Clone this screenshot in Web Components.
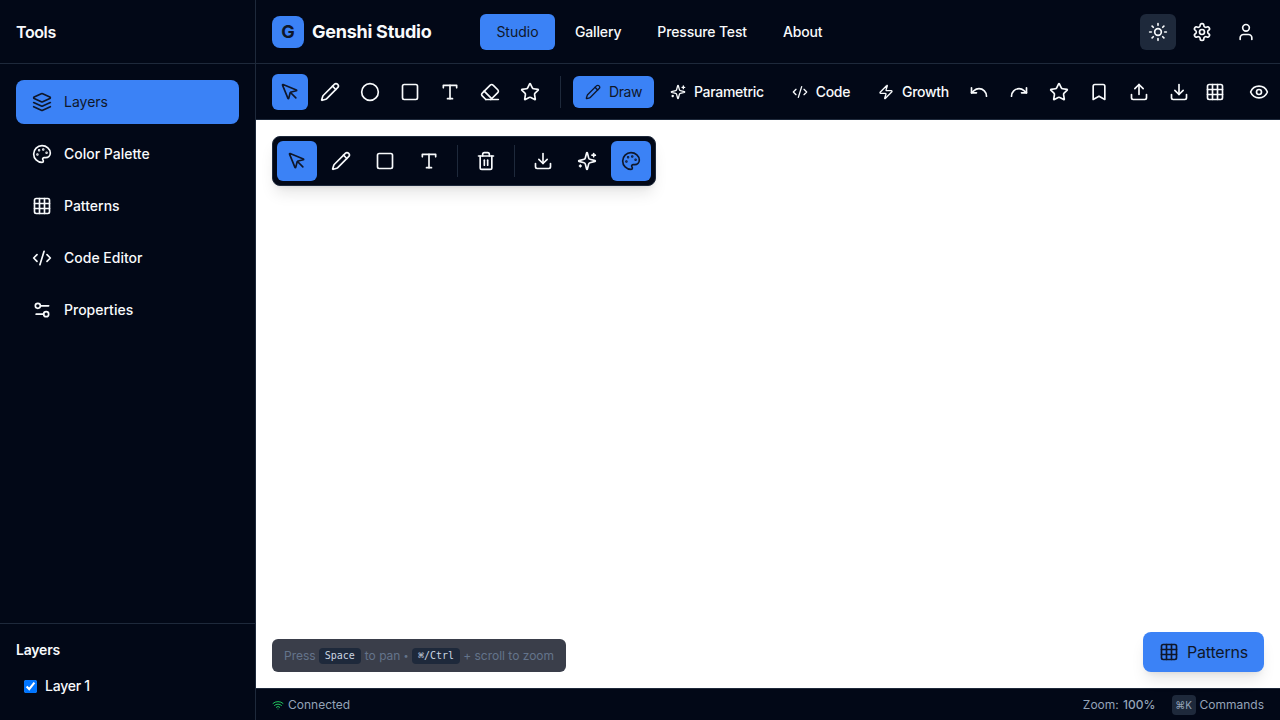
<!DOCTYPE html>
<html>
<head>
<meta charset="utf-8">
<title>Genshi Studio</title>
<style>
html, body { margin: 0; height: 100%; overflow: hidden; }
body { font-family: Inter, "Noto Sans", sans-serif; background: #020817; color: #f8fafc; }
</style>
</head>
<body>
<gs-app></gs-app>
<script>
//Lucide style icon bodies
const ICONS = {
	pointer: '<path d="M12.586 12.586 19 19"/><path d="M3.688 3.037a.497.497 0 0 0-.651.651l6.5 15.999a.501.501 0 0 0 .947-.062l1.569-6.083a2 2 0 0 1 1.448-1.479l6.124-1.579a.5.5 0 0 0 .063-.947z"/>',
	pencil: '<path d="M21.174 6.812a1 1 0 0 0-3.986-3.987L3.842 16.174a2 2 0 0 0-.5.83l-1.321 4.352a.5.5 0 0 0 .623.622l4.353-1.32a2 2 0 0 0 .83-.497z"/><path d="m15 5 4 4"/>',
	circle: '<circle cx="12" cy="12" r="10"/>',
	square: '<rect x="3" y="3" width="18" height="18" rx="2"/>',
	type: '<path d="M4 7V4h16v3"/><path d="M9 20h6"/><path d="M12 4v16"/>',
	eraser: '<path d="m7 21-4.3-4.3c-1-1-1-2.5 0-3.4l9.6-9.6c1-1 2.5-1 3.4 0l5.6 5.6c1 1 1 2.5 0 3.4L13 21"/><path d="M22 21H7"/><path d="m5 11 9 9"/>',
	star: '<path d="M11.525 2.295a.53.53 0 0 1 .95 0l2.31 4.679a2.123 2.123 0 0 0 1.595 1.16l5.166.756a.53.53 0 0 1 .294.904l-3.736 3.638a2.123 2.123 0 0 0-.611 1.878l.882 5.14a.53.53 0 0 1-.771.56l-4.618-2.428a2.122 2.122 0 0 0-1.973 0L6.396 21.01a.53.53 0 0 1-.77-.56l.881-5.139a2.122 2.122 0 0 0-.611-1.879L2.16 9.795a.53.53 0 0 1 .294-.906l5.165-.755a2.122 2.122 0 0 0 1.597-1.16z"/>',
	sparkles: '<path d="M9.937 15.5A2 2 0 0 0 8.5 14.063l-6.135-1.582a.5.5 0 0 1 0-.962L8.5 9.936A2 2 0 0 0 9.937 8.5l1.582-6.135a.5.5 0 0 1 .963 0L14.063 8.5A2 2 0 0 0 15.5 9.937l6.135 1.581a.5.5 0 0 1 0 .964L15.5 14.063a2 2 0 0 0-1.437 1.437l-1.582 6.135a.5.5 0 0 1-.963 0z"/><path d="M20 3v4"/><path d="M22 5h-4"/><path d="M4 17v2"/><path d="M5 18H3"/>',
	code: '<path d="m18 16 4-4-4-4"/><path d="m6 8-4 4 4 4"/><path d="m14.5 4-5 16"/>',
	zap: '<path d="M4 14a1 1 0 0 1-.78-1.63l9.9-10.2a.5.5 0 0 1 .86.46l-1.92 6.02A1 1 0 0 0 13 10h7a1 1 0 0 1 .78 1.63l-9.9 10.2a.5.5 0 0 1-.86-.46l1.92-6.02A1 1 0 0 0 11 14z"/>',
	undo: '<path d="M3 7v6h6"/><path d="M21 17a9 9 0 0 0-9-9 9 9 0 0 0-6 2.3L3 13"/>',
	redo: '<path d="M21 7v6h-6"/><path d="M3 17a9 9 0 0 1 9-9 9 9 0 0 1 6 2.3l3 2.7"/>',
	bookmark: '<path d="m19 21-7-4-7 4V5a2 2 0 0 1 2-2h10a2 2 0 0 1 2 2v16z"/>',
	upload: '<path d="M21 15v4a2 2 0 0 1-2 2H5a2 2 0 0 1-2-2v-4"/><path d="m17 8-5-5-5 5"/><path d="M12 3v12"/>',
	download: '<path d="M21 15v4a2 2 0 0 1-2 2H5a2 2 0 0 1-2-2v-4"/><path d="m7 10 5 5 5-5"/><path d="M12 15V3"/>',
	grid: '<rect x="3" y="3" width="18" height="18" rx="2"/><path d="M3 9h18"/><path d="M3 15h18"/><path d="M9 3v18"/><path d="M15 3v18"/>',
	eye: '<path d="M2.062 12.348a1 1 0 0 1 0-.696 10.75 10.75 0 0 1 19.876 0 1 1 0 0 1 0 .696 10.75 10.75 0 0 1-19.876 0"/><circle cx="12" cy="12" r="3"/>',
	trash: '<path d="M3 6h18"/><path d="M19 6v14c0 1-1 2-2 2H7c-1 0-2-1-2-2V6"/><path d="M8 6V4c0-1 1-2 2-2h4c1 0 2 1 2 2v2"/><path d="M10 11v6"/><path d="M14 11v6"/>',
	palette: '<circle cx="13.5" cy="6.5" r=".5" fill="currentColor"/><circle cx="17.5" cy="10.5" r=".5" fill="currentColor"/><circle cx="8.5" cy="7.5" r=".5" fill="currentColor"/><circle cx="6.5" cy="12.5" r=".5" fill="currentColor"/><path d="M12 2C6.5 2 2 6.5 2 12s4.5 10 10 10c.926 0 1.648-.746 1.648-1.688 0-.437-.18-.835-.437-1.125-.29-.289-.438-.652-.438-1.125a1.64 1.64 0 0 1 1.668-1.668h1.996c3.051 0 5.555-2.503 5.555-5.554C21.965 6.012 17.461 2 12 2z"/>',
	layers: '<path d="m12.83 2.18a2 2 0 0 0-1.66 0L2.6 6.08a1 1 0 0 0 0 1.83l8.58 3.91a2 2 0 0 0 1.66 0l8.58-3.9a1 1 0 0 0 0-1.83Z"/><path d="m22 17.65-9.17 4.16a2 2 0 0 1-1.66 0L2 17.65"/><path d="m22 12.65-9.17 4.16a2 2 0 0 1-1.66 0L2 12.65"/>',
	sliders: '<path d="M20 7h-9"/><path d="M14 17H5"/><circle cx="17" cy="17" r="3"/><circle cx="7" cy="7" r="3"/>',
	sun: '<circle cx="12" cy="12" r="4"/><path d="M12 2v2"/><path d="M12 20v2"/><path d="m4.93 4.93 1.41 1.41"/><path d="m17.66 17.66 1.41 1.41"/><path d="M2 12h2"/><path d="M20 12h2"/><path d="m6.34 17.66-1.41 1.41"/><path d="m19.07 4.93-1.41 1.41"/>',
	settings: '<path d="M12.22 2h-.44a2 2 0 0 0-2 2v.18a2 2 0 0 1-1 1.73l-.43.25a2 2 0 0 1-2 0l-.15-.08a2 2 0 0 0-2.73.73l-.22.38a2 2 0 0 0 .73 2.73l.15.1a2 2 0 0 1 1 1.72v.51a2 2 0 0 1-1 1.74l-.15.09a2 2 0 0 0-.73 2.73l.22.38a2 2 0 0 0 2.73.73l.15-.08a2 2 0 0 1 2 0l.43.25a2 2 0 0 1 1 1.73V20a2 2 0 0 0 2 2h.44a2 2 0 0 0 2-2v-.18a2 2 0 0 1 1-1.73l.43-.25a2 2 0 0 1 2 0l.15.08a2 2 0 0 0 2.73-.73l.22-.39a2 2 0 0 0-.73-2.73l-.15-.08a2 2 0 0 1-1-1.74v-.5a2 2 0 0 1 1-1.74l.15-.09a2 2 0 0 0 .73-2.73l-.22-.38a2 2 0 0 0-2.73-.73l-.15.08a2 2 0 0 1-2 0l-.43-.25a2 2 0 0 1-1-1.73V4a2 2 0 0 0-2-2z"/><circle cx="12" cy="12" r="3"/>',
	user: '<path d="M19 21v-2a4 4 0 0 0-4-4H9a4 4 0 0 0-4 4v2"/><circle cx="12" cy="7" r="4"/>',
	wifi: '<path d="M12 20h.01"/><path d="M2 8.82a15 15 0 0 1 20 0"/><path d="M5 12.859a10 10 0 0 1 14 0"/><path d="M8.5 16.429a5 5 0 0 1 7 0"/>'
};

//Small helper so every element gets an open shadow root
class Base extends HTMLElement {
	constructor() {
		super();
		this.attachShadow({ mode: "open" });
	}
	connectedCallback() {
		this.shadowRoot.innerHTML = this.render();
	}
}

class GsIcon extends Base {
	render() {
		let size = this.getAttribute("size") || 20;
		return `<style>
			:host { display: inline-flex; flex: none; width: ${size}px; height: ${size}px; }
			svg { display: block; }
		</style>
		<svg xmlns="http://www.w3.org/2000/svg" width="${size}" height="${size}" viewBox="0 0 24 24" fill="none" stroke="currentColor" stroke-width="2" stroke-linecap="round" stroke-linejoin="round">${ICONS[this.getAttribute("name")]}</svg>`;
	}
}

//Square icon button, box=40 is used by the floating tool panel
class GsIconBtn extends Base {
	render() {
		let box = this.getAttribute("box") || 36;
		return `<style>
			:host { display: inline-flex; flex: none; align-items: center; justify-content: center; width: ${box}px; height: ${box}px; border-radius: 6px; color: #f8fafc; }
			:host([active]) { background: #3b82f6; color: #0f172a; }
			:host([soft]) { background: #1e293b; }
		</style>
		<gs-icon name="${this.getAttribute("icon")}"></gs-icon>`;
	}
}

//Icon + label button of the mode switcher
class GsModeBtn extends Base {
	render() {
		return `<style>
			:host { display: inline-flex; flex: none; align-items: center; gap: 8px; height: 32px; padding: 0 12px; border-radius: 6px; font-size: 14px; font-weight: 500; letter-spacing: -0.3px; color: #f8fafc; }
			:host([active]) { background: #3b82f6; color: #0f172a; font-weight: 400; letter-spacing: -0.45px; }
		</style>
		<gs-icon name="${this.getAttribute("icon")}" size="16"></gs-icon><slot></slot>`;
	}
}

class GsSideItem extends Base {
	render() {
		return `<style>
			:host { display: flex; align-items: center; gap: 12px; height: 44px; padding: 0 16px; border-radius: 8px; font-size: 14px; font-weight: 500; color: #f8fafc; }
			:host([active]) { background: #3b82f6; color: #0f172a; font-weight: 400; }
			span { margin-top: -2px; }
		</style>
		<gs-icon name="${this.getAttribute("icon")}"></gs-icon><span><slot></slot></span>`;
	}
}

class GsSidebar extends Base {
	render() {
		return `<style>
			:host { display: flex; flex-direction: column; flex: none; width: 256px; height: 100%; box-sizing: border-box; border-right: 1px solid #1e293b; background: #020817; }
			.head { display: flex; align-items: center; height: 64px; box-sizing: border-box; padding: 0 16px; border-bottom: 1px solid #1e293b; font-size: 16px; font-weight: 600; letter-spacing: -0.4px; }
			nav { flex: 1; display: flex; flex-direction: column; gap: 8px; padding: 16px; }
			.foot { height: 97px; box-sizing: border-box; padding: 16px; border-top: 1px solid #1e293b; }
			h3 { margin: 0 0 12px; font-size: 14px; line-height: 20px; font-weight: 600; letter-spacing: -0.2px; }
			label { display: flex; align-items: center; gap: 8px; padding: 0 8px; height: 28px; font-size: 14px; font-weight: 500; letter-spacing: -0.25px; }
			label span { margin-top: -2px; }
			input { width: 13px; height: 13px; margin: 0; }
		</style>
		<div class="head">Tools</div>
		<nav>
			<gs-side-item icon="layers" active>Layers</gs-side-item>
			<gs-side-item icon="palette">Color Palette</gs-side-item>
			<gs-side-item icon="grid">Patterns</gs-side-item>
			<gs-side-item icon="code">Code Editor</gs-side-item>
			<gs-side-item icon="sliders">Properties</gs-side-item>
		</nav>
		<div class="foot">
			<h3>Layers</h3>
			<label><input type="checkbox" checked><span>Layer 1</span></label>
		</div>`;
	}
}

class GsHeader extends Base {
	render() {
		return `<style>
			:host { display: flex; align-items: center; flex: none; height: 64px; box-sizing: border-box; padding: 0 16px; border-bottom: 1px solid #1e293b; }
			.logo { display: flex; align-items: center; justify-content: center; width: 32px; height: 32px; border-radius: 8px; background: #3b82f6; color: #0f172a; font-size: 18px; font-weight: 700; }
			.name { width: 120px; margin-left: 8px; font-size: 18px; font-weight: 700; letter-spacing: -0.25px; white-space: nowrap; }
			nav { display: flex; gap: 4px; margin-left: 48px; }
			a { display: flex; align-items: center; height: 36px; padding: 0 16px; border-radius: 6px; font-size: 14px; font-weight: 500; letter-spacing: -0.15px; color: #f8fafc; }
			a.active { width: 43px; justify-content: center; background: #3b82f6; color: #0f172a; font-weight: 400; letter-spacing: 0; }
			.right { display: flex; gap: 8px; margin-left: auto; }
		</style>
		<div class="logo">G</div>
		<div class="name">Genshi Studio</div>
		<nav>
			<a class="active">Studio</a>
			<a>Gallery</a>
			<a>Pressure Test</a>
			<a>About</a>
		</nav>
		<div class="right">
			<gs-icon-btn icon="sun" soft></gs-icon-btn>
			<gs-icon-btn icon="settings"></gs-icon-btn>
			<gs-icon-btn icon="user"></gs-icon-btn>
		</div>`;
	}
}

class GsToolbar extends Base {
	render() {
		return `<style>
			:host { display: flex; align-items: center; flex: none; height: 56px; box-sizing: border-box; padding: 0 0 0 16px; border-bottom: 1px solid #1e293b; overflow: hidden; }
			.group { display: flex; align-items: center; gap: 4px; flex: none; }
			.sep { flex: none; width: 1px; height: 32px; margin: 0 12px; background: #1e293b; }
		</style>
		<div class="group">
			<gs-icon-btn icon="pointer" active></gs-icon-btn>
			<gs-icon-btn icon="pencil"></gs-icon-btn>
			<gs-icon-btn icon="circle"></gs-icon-btn>
			<gs-icon-btn icon="square"></gs-icon-btn>
			<gs-icon-btn icon="type"></gs-icon-btn>
			<gs-icon-btn icon="eraser"></gs-icon-btn>
			<gs-icon-btn icon="star"></gs-icon-btn>
		</div>
		<div class="sep"></div>
		<div class="group">
			<gs-mode-btn icon="pencil" active>Draw</gs-mode-btn>
			<gs-mode-btn icon="sparkles">Parametric</gs-mode-btn>
			<gs-mode-btn icon="code">Code</gs-mode-btn>
			<gs-mode-btn icon="zap">Growth</gs-mode-btn>
		</div>
		<div class="group">
			<gs-icon-btn icon="undo"></gs-icon-btn>
			<gs-icon-btn icon="redo"></gs-icon-btn>
			<gs-icon-btn icon="star"></gs-icon-btn>
			<gs-icon-btn icon="bookmark"></gs-icon-btn>
			<gs-icon-btn icon="upload"></gs-icon-btn>
			<gs-icon-btn icon="download"></gs-icon-btn>
		</div>
		<gs-icon-btn icon="grid"></gs-icon-btn>
		<gs-icon-btn icon="eye" style="margin-left:8px"></gs-icon-btn>`;
	}
}

//Floating panel that sits over the canvas
class GsFloatTools extends Base {
	render() {
		return `<style>
			:host { position: absolute; left: 16px; top: 16px; display: flex; align-items: center; gap: 4px; padding: 4px; border: 1px solid #1e293b; border-radius: 8px; background: #020817; box-shadow: 0 10px 15px -3px rgba(0,0,0,.1), 0 4px 6px -4px rgba(0,0,0,.1); }
			.sep { width: 1px; height: 32px; margin: 0 4px; background: #1e293b; }
		</style>
		<gs-icon-btn box="40" icon="pointer" active></gs-icon-btn>
		<gs-icon-btn box="40" icon="pencil"></gs-icon-btn>
		<gs-icon-btn box="40" icon="square"></gs-icon-btn>
		<gs-icon-btn box="40" icon="type"></gs-icon-btn>
		<div class="sep"></div>
		<gs-icon-btn box="40" icon="trash"></gs-icon-btn>
		<div class="sep"></div>
		<gs-icon-btn box="40" icon="download"></gs-icon-btn>
		<gs-icon-btn box="40" icon="sparkles"></gs-icon-btn>
		<gs-icon-btn box="40" icon="palette" active></gs-icon-btn>`;
	}
}

class GsHint extends Base {
	render() {
		return `<style>
			:host { position: absolute; left: 16px; bottom: 16px; display: flex; align-items: center; height: 33px; box-sizing: border-box; padding: 0 12px; border-radius: 6px; background: rgba(2,8,23,.78); color: #64748b; font-size: 12px; }
			kbd { display: inline-block; padding: 0 6px; height: 16px; line-height: 16px; border-radius: 4px; background: #1e293b; color: #cbd5e1; font-family: "DejaVu Sans Mono", "Liberation Mono", monospace; font-size: 10px; margin: 0 4px 0 3px; }
			kbd.last { margin-right: 3px; }
			.dot { margin: 0 .5px 0 3px; font-size: 9px; }
		</style>
		<span>Press</span><kbd>Space</kbd><span>to pan</span><span class="dot">•</span><kbd class="last">⌘/Ctrl</kbd><span>+ scroll to zoom</span>`;
	}
}

class GsFab extends Base {
	render() {
		return `<style>
			:host { position: absolute; right: 16px; bottom: 16px; display: flex; align-items: center; gap: 8px; height: 40px; padding: 0 16px; border-radius: 8px; background: #3b82f6; color: #0f172a; font-size: 16px; letter-spacing: -0.2px; font-weight: 400; box-shadow: 0 10px 15px -3px rgba(0,0,0,.1), 0 4px 6px -4px rgba(0,0,0,.1); }
		</style>
		<gs-icon name="grid"></gs-icon><slot></slot>`;
	}
}

class GsCanvas extends Base {
	render() {
		return `<style>
			:host { display: block; position: relative; flex: 1; min-height: 0; background: #fff; }
		</style>
		<gs-float-tools></gs-float-tools>
		<gs-hint></gs-hint>
		<gs-fab>Patterns</gs-fab>`;
	}
}

class GsStatus extends Base {
	render() {
		return `<style>
			:host { display: flex; align-items: center; flex: none; height: 32px; box-sizing: border-box; padding: 0 16px; border-top: 1px solid #1e293b; font-size: 12px; color: #94a3b8; }
			.ok { display: flex; align-items: center; gap: 4px; }
			gs-icon { color: #22c55e; }
			.right { display: flex; align-items: center; margin-left: auto; word-spacing: 1px; }
			b { font-weight: 500; }
			kbd { display: flex; align-items: center; justify-content: center; width: 24px; height: 20px; margin: 0 4px 0 16px; border-radius: 4px; background: #1e293b; font-family: Inter, sans-serif; font-size: 10px; }
		</style>
		<div class="ok"><gs-icon name="wifi" size="12"></gs-icon>Connected</div>
		<div class="right"><span>Zoom: <b>100%</b></span><kbd>⌘K</kbd><span>Commands</span></div>`;
	}
}

class GsApp extends Base {
	render() {
		return `<style>
			:host { display: flex; height: 720px; width: 1280px; overflow: hidden; }
			main { flex: 1; min-width: 0; display: flex; flex-direction: column; }
		</style>
		<gs-sidebar></gs-sidebar>
		<main>
			<gs-header></gs-header>
			<gs-toolbar></gs-toolbar>
			<gs-canvas></gs-canvas>
			<gs-status></gs-status>
		</main>`;
	}
}

customElements.define("gs-icon", GsIcon);
customElements.define("gs-icon-btn", GsIconBtn);
customElements.define("gs-mode-btn", GsModeBtn);
customElements.define("gs-side-item", GsSideItem);
customElements.define("gs-sidebar", GsSidebar);
customElements.define("gs-header", GsHeader);
customElements.define("gs-toolbar", GsToolbar);
customElements.define("gs-float-tools", GsFloatTools);
customElements.define("gs-hint", GsHint);
customElements.define("gs-fab", GsFab);
customElements.define("gs-canvas", GsCanvas);
customElements.define("gs-status", GsStatus);
customElements.define("gs-app", GsApp);
</script>
</body>
</html>
